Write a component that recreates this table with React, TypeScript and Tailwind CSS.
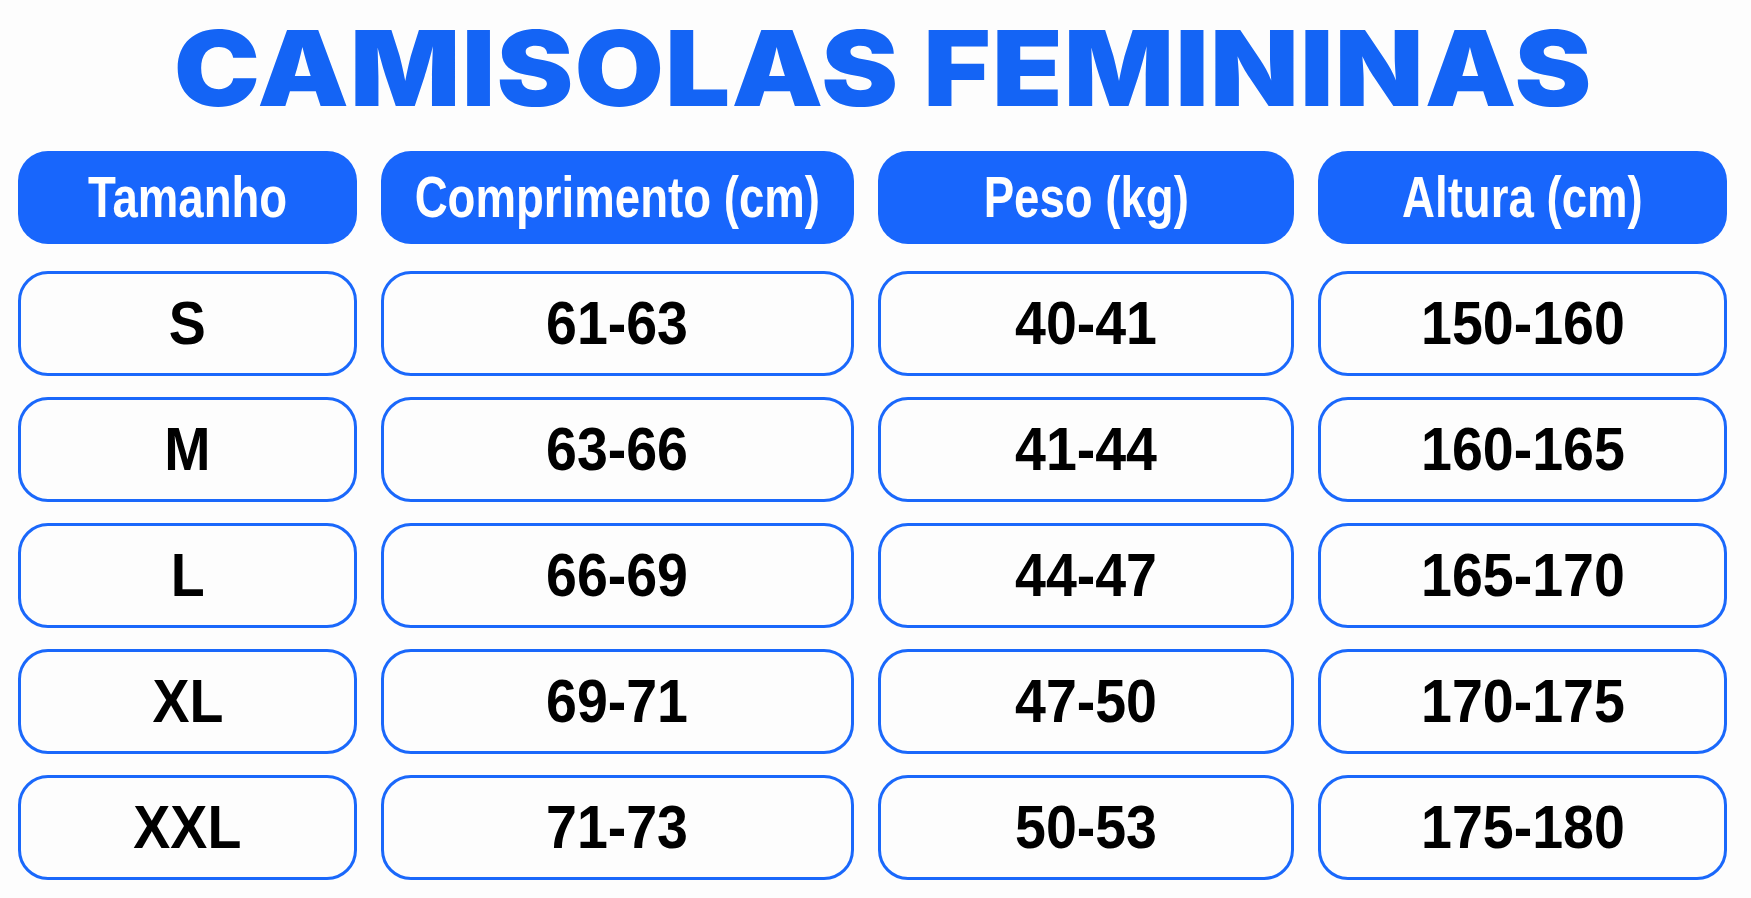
import React from "react";

const headers = ["Tamanho", "Comprimento (cm)", "Peso (kg)", "Altura (cm)"];
const rows = [
  ["S", "61-63", "40-41", "150-160"],
  ["M", "63-66", "41-44", "160-165"],
  ["L", "66-69", "44-47", "165-170"],
  ["XL", "69-71", "47-50", "170-175"],
  ["XXL", "71-73", "50-53", "175-180"],
];

export default function App() {
  return (
    <div className="w-[1751px] h-[898px] bg-[#fdfdfd] overflow-hidden flex flex-col">
      <div className="pt-[16px] flex justify-center pl-[16px]">
        <h1 className="inline-block scale-x-[1.11] text-center text-[104px] leading-none font-black text-[#1464f5] [font-family:Inter,'Liberation_Sans',sans-serif] tracking-[0.01em] whitespace-nowrap">
          CAMISOLAS FEMININAS
        </h1>
      </div>
      <div className="mt-[31px] pl-[18px] grid grid-cols-[339px_473px_416px_409px] gap-x-[24px]">
        {headers.map((h) => (
          <div
            key={h}
            className="h-[93px] rounded-[30px] bg-[#1866fc] flex items-center justify-center"
          >
            <span className="inline-block scale-x-[0.8] text-white font-bold text-[57px] leading-none [font-family:'Liberation_Sans',Arial,sans-serif] whitespace-nowrap">
              {h}
            </span>
          </div>
        ))}
      </div>
      <div className="mt-[27px] pl-[18px] grid grid-cols-[339px_473px_416px_409px] gap-x-[24px] gap-y-[21px]">
        {rows.flatMap((r, i) =>
          r.map((c, j) => (
            <div
              key={`${i}-${j}`}
              className="h-[105px] rounded-[30px] border-[3px] border-[#1a68fb] bg-[#fdfdfd] flex items-center justify-center"
            >
              <span className="inline-block scale-x-[0.91] text-black font-bold text-[61px] leading-none [font-family:'Liberation_Sans',Arial,sans-serif] whitespace-nowrap">
                {c}
              </span>
            </div>
          ))
        )}
      </div>
    </div>
  );
}
